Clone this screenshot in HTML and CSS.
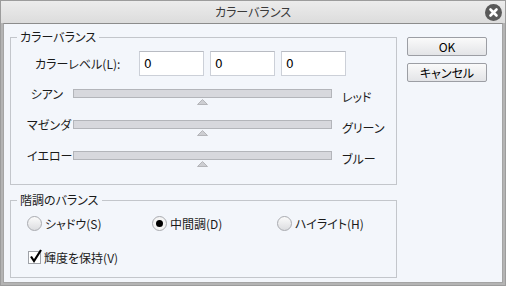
FILE: index.html
```html
<!DOCTYPE html>
<html lang="ja">
<head>
    <meta charset="utf-8">
    <title>カラーバランス</title>
    <link rel="stylesheet" href="styles.css">
</head>
<body>
<div class="window">
    <div class="titlebar">
        <span></span>
        <span class="title">カラーバランス</span>
        <span class="close">
            <svg width="17" height="17" viewBox="0 0 17 17">
                <circle cx="8.5" cy="8.5" r="8.5" fill="#5a5a5a"/>
                <path d="M5.5 5.5l6 6M11.5 5.5l-6 6" stroke="#fff" stroke-width="2.6" stroke-linecap="round"/>
            </svg>
        </span>
    </div>
    <div class="content">
        <div class="groups">
            <fieldset class="group group-balance">
                <legend>カラーバランス</legend>
                <div class="level-row">
                    <label class="level-label" for="level-c">カラーレベル(L):</label>
                    <input class="level" id="level-c" type="text" value="0">
                    <input class="level" type="text" value="0">
                    <input class="level" type="text" value="0">
                </div>
                <div class="slider-row">
                    <span class="slider-left">シアン</span>
                    <div class="slider">
                        <div class="track"></div>
                        <svg class="thumb" width="11" height="6" viewBox="0 0 11 6"><polygon points="5.5,0.5 10.5,5.5 0.5,5.5" fill="#cdced2" stroke="#b4b5b9"/></svg>
                    </div>
                    <span class="slider-right">レッド</span>
                </div>
                <div class="slider-row">
                    <span class="slider-left">マゼンダ</span>
                    <div class="slider">
                        <div class="track"></div>
                        <svg class="thumb" width="11" height="6" viewBox="0 0 11 6"><polygon points="5.5,0.5 10.5,5.5 0.5,5.5" fill="#cdced2" stroke="#b4b5b9"/></svg>
                    </div>
                    <span class="slider-right">グリーン</span>
                </div>
                <div class="slider-row">
                    <span class="slider-left">イエロー</span>
                    <div class="slider">
                        <div class="track"></div>
                        <svg class="thumb" width="11" height="6" viewBox="0 0 11 6"><polygon points="5.5,0.5 10.5,5.5 0.5,5.5" fill="#cdced2" stroke="#b4b5b9"/></svg>
                    </div>
                    <span class="slider-right">ブルー</span>
                </div>
            </fieldset>
            <fieldset class="group group-tone">
                <legend>階調のバランス</legend>
                <div class="radio-row">
                    <label class="radio"><span class="radio-dot"></span>シャドウ(S)</label>
                    <label class="radio"><span class="radio-dot checked"></span>中間調(D)</label>
                    <label class="radio"><span class="radio-dot"></span>ハイライト(H)</label>
                </div>
                <label class="check">
                    <span class="check-box">
                        <svg width="15" height="15" viewBox="0 0 15 15"><path d="M3 7.5l3 4.5 7-11" fill="none" stroke="#000" stroke-width="2.2"/></svg>
                    </span>輝度を保持(V)
                </label>
            </fieldset>
        </div>
        <div class="buttons">
            <button class="btn" type="button">OK</button>
            <button class="btn" type="button">キャンセル</button>
        </div>
    </div>
</div>
</body>
</html>
```

FILE: styles.css
```css
html {
    box-sizing: border-box;
}

*, *:before, *:after {
    box-sizing: inherit;
}

body {
    margin: 0;
    font-family: "Noto Sans CJK JP", "Noto Sans", sans-serif;
    font-size: 12px;
    font-feature-settings: "palt";
    color: #1a1a1a;
    background: #fff;
}

.window {
    width: 506px;
    height: 286px;
    background: #b4b4b4;
    border: 1px solid #9c9c9c;
    display: flex;
    flex-direction: column;
}

.titlebar {
    height: 22px;
    display: grid;
    grid-template-columns: 1fr auto 1fr;
    align-items: center;
    background: linear-gradient(#ececec, #dcdcdc);
}

.title {
    color: #3a3a3a;
    font-size: 12px;
    line-height: 22px;
}

.close {
    justify-self: end;
    display: flex;
    margin-right: 3px;
}

.content {
    flex: 1;
    margin: 0 2px 2px;
    background: #f3f6fb;
    border: 1px solid #a4a4a4;
    border-top-color: #8c8c8c;
    display: flex;
    gap: 10px;
    padding: 6px 0 0 6px;
}

.groups {
    width: 387px;
}

.group {
    margin: 0;
    padding: 0 0 0 16px;
    border: 1px solid #c3c6cb;
    min-width: 0;
}

.group legend {
    margin-left: -10px;
    padding: 0 3px;
    line-height: 14px;
}

.group-balance {
    height: 155px;
    padding-top: 7px;
}

.group-tone {
    height: 85px;
    margin-top: 8px;
    padding-top: 9px;
}

.level-row {
    display: flex;
    align-items: center;
    gap: 6px;
    padding-left: 8px;
    margin-bottom: 13px;
}

.level-label {
    width: 98px;
}

.level {
    width: 65px;
    height: 25px;
    margin: 0;
    padding: 0 4px;
    border: 1px solid #ccd0d8;
    border-top-color: #b8bbc2;
    background: #fff;
    font: inherit;
    font-family: "DejaVu Sans", sans-serif;
    color: #000;
}

.slider-row {
    display: flex;
    align-items: flex-start;
    gap: 10px;
    height: 31px;
}

.slider-left {
    width: 36px;
    text-align: right;
    white-space: nowrap;
    line-height: 9px;
}

.slider-right {
    line-height: 9px;
    margin-top: 3px;
    white-space: nowrap;
}

.slider {
    width: 259px;
    display: flex;
    flex-direction: column;
    align-items: center;
}

.track {
    width: 100%;
    height: 9px;
    background: #d7d8dd;
    border: 1px solid #b3b5ba;
}

.thumb {
    display: block;
    margin-top: 1px;
}

.radio-row {
    display: grid;
    grid-template-columns: 125px 125px 1fr;
    height: 15px;
    margin-bottom: 19px;
}

.radio,
.check {
    display: flex;
    align-items: center;
    gap: 3px;
    line-height: 15px;
}

.radio-dot {
    width: 15px;
    height: 15px;
    border-radius: 50%;
    border: 1px solid #a9abb0;
    background: linear-gradient(#fbfbfb, #dcdde0);
    display: flex;
    align-items: center;
    justify-content: center;
}

.radio-dot.checked {
    background: #f4f4f4;
}

.radio-dot.checked:after {
    content: "";
    width: 7px;
    height: 7px;
    border-radius: 50%;
    background: #000;
}

.check {
    padding-left: 1px;
}

.check-box {
    position: relative;
    width: 13px;
    height: 13px;
    border: 1px solid #9fa2a8;
    background: #fff;
}

.check-box svg {
    position: absolute;
    left: -1px;
    top: -3px;
}

.buttons {
    display: flex;
    flex-direction: column;
    gap: 7px;
    padding-top: 7px;
}

.btn {
    width: 80px;
    height: 19px;
    padding: 0;
    border: 1px solid #9c9ea4;
    border-radius: 2px;
    background: linear-gradient(#fafafa, #e3e4e7);
    font: inherit;
    font-feature-settings: "palt";
    color: #000;
    line-height: 17px;
}
```
